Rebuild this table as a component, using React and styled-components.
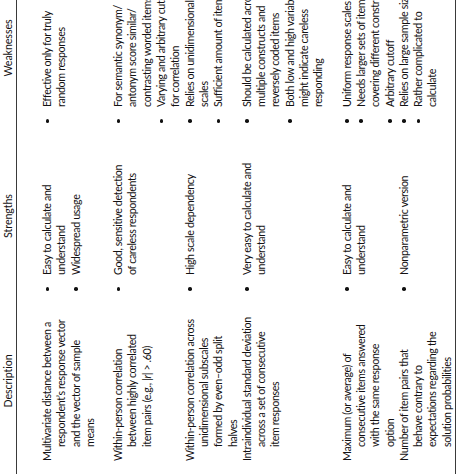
import React from 'react'
import styled, { createGlobalStyle } from 'styled-components'

const GlobalStyle = createGlobalStyle`
    html, body {
        margin: 0;
        padding: 0;
        background: #fff;
    }
`

const groups = [
    [
        {
            desc: ['Multivariate distance between a', 'respondent’s response vector', 'and the vector of sample', 'means'],
            strengths: [['Easy to calculate and', 'understand'], ['Widespread usage']],
            weaknesses: [['Effective only for truly', 'random responses']],
        },
    ],
    [
        {
            desc: ['Within-person correlation', 'between highly correlated', <>item pairs (e.g., |<i>r</i>| &gt; .60)</>],
            strengths: [['Good, sensitive detection', 'of careless respondents']],
            weaknesses: [
                ['For semantic synonym/', 'antonym score similar/', 'contrasting worded items'],
                ['Varying and arbitrary cutoff', 'for correlation'],
            ],
        },
        {
            desc: ['Within-person correlation across', 'unidimensional subscales', 'formed by even–odd split', 'halves'],
            strengths: [['High scale dependency']],
            weaknesses: [['Relies on unidimensional', 'scales'], ['Sufficient amount of items']],
        },
        {
            desc: ['Intraindividual standard deviation', 'across a set of consecutive', 'item responses'],
            strengths: [['Very easy to calculate and', 'understand']],
            weaknesses: [
                ['Should be calculated across', 'multiple constructs and', 'reversely coded items'],
                ['Both low and high variability', 'might indicate careless', 'responding'],
            ],
        },
    ],
    [
        {
            desc: ['Maximum (or average) of', 'consecutive items answered', 'with the same response', 'option'],
            strengths: [['Easy to calculate and', 'understand']],
            weaknesses: [
                ['Uniform response scales'],
                ['Needs larger sets of items', 'covering different constructs'],
                ['Arbitrary cutoff'],
            ],
        },
        {
            desc: ['Number of item pairs that', 'behave contrary to', 'expectations regarding the', 'solution probabilities'],
            strengths: [['Nonparametric version']],
            weaknesses: [['Relies on large sample size'], ['Rather complicated to', 'calculate']],
        },
    ],
]

const App = () => {
    return (
        <Page>
            <GlobalStyle />
            <Table>
                <HeaderRow>
                    <HeadCell>Description</HeadCell>
                    <HeadCell>Strengths</HeadCell>
                    <HeadCell>Weaknesses</HeadCell>
                </HeaderRow>
                <Body>
                    {groups.map((rows, g) => (
                        <Group key={g}>
                            {rows.map((row, r) => (
                                <Row key={r}>
                                    <DescCell>
                                        {row.desc.map((line, i) => (
                                            <Line key={i} $indent={i > 0}>{line}</Line>
                                        ))}
                                    </DescCell>
                                    <ListCell>
                                        {row.strengths.map((item, i) => (
                                            <Item key={i}>
                                                {item.map((line, j) => <Line key={j}>{line}</Line>)}
                                            </Item>
                                        ))}
                                    </ListCell>
                                    <ListCell>
                                        {row.weaknesses.map((item, i) => (
                                            <Item key={i}>
                                                {item.map((line, j) => <Line key={j}>{line}</Line>)}
                                            </Item>
                                        ))}
                                    </ListCell>
                                </Row>
                            ))}
                        </Group>
                    ))}
                </Body>
            </Table>
        </Page>
    )
}

export default App

const Page = styled.div`
    width: 474px;
    height: 474px;
    overflow: hidden;
    background: #fff;
`

// the table is printed sideways, so lay it out flat and turn it
const Table = styled.div`
    width: 520px;
    transform-origin: 0 0;
    transform: translateY(474px) rotate(-90deg);
    font-family: Lato, "Liberation Sans", sans-serif;
    font-size: 10.7px;
    letter-spacing: -0.36px;
    color: #141213;
    border-bottom: 1px solid #3a3a3a;
`

const Columns = styled.div`
    display: grid;
    grid-template-columns: 178px 168px 174px;
`

const HeaderRow = styled(Columns)`
    height: 16px;
    line-height: 16px;
    border-bottom: 1px solid #3a3a3a;
`

const HeadCell = styled.div`
    text-align: center;
    padding-left: 8px;
    white-space: nowrap;
    letter-spacing: -0.1px;

    &:nth-child(2) { padding-left: 0; padding-right: 8px; }
    &:nth-child(3) { padding-left: 0; padding-right: 14px; }
`

const Body = styled.div`
    padding: 23px 0 1px;
    line-height: 14.3px;
`

const Group = styled.div`
    & + & {
        margin-top: 14px;
    }
`

const Row = styled(Columns)``

const DescCell = styled.div`
    padding-left: 13px;
`

const Line = styled.div`
    white-space: nowrap;
    padding-left: ${p => (p.$indent ? '14px' : '0')};
`

const ListCell = styled.div`
    padding-left: 21px;
`

const Item = styled.div`
    position: relative;

    &::before {
        content: '';
        position: absolute;
        left: -16px;
        top: 5.5px;
        width: 3.5px;
        height: 3.5px;
        border-radius: 50%;
        background: #111;
    }
`
